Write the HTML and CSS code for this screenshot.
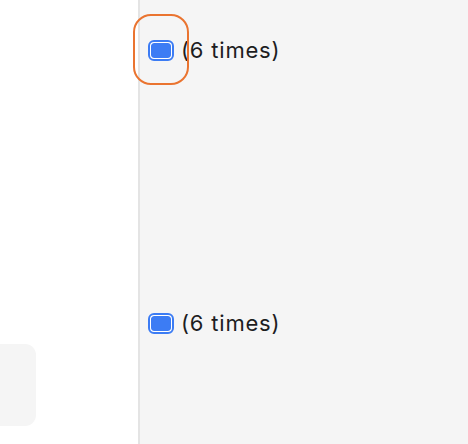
FILE: index.html
```html
<!DOCTYPE html>
<html>
<head>
<meta charset="utf-8">
<link rel="stylesheet" href="styles.css">
</head>
<body>
<div class="layout">
  <aside class="side">
    <div class="side-card"></div>
  </aside>
  <main class="main">
    <div class="row row-first">
      <span class="check"></span>
      <span class="label">(6 times)</span>
      <span class="ring"></span>
    </div>
    <div class="row row-second">
      <span class="check"></span>
      <span class="label">(6 times)</span>
    </div>
  </main>
</div>
</body>
</html>
```
FILE: styles.css
```css
html, body {
  margin: 0;
  padding: 0;
  height: 100%;
}
body {
  font-family: Inter, "Liberation Sans", sans-serif;
  color: #1d1d1f;
  background: #ffffff;
}
.layout {
  display: flex;
  height: 444px;
}
.side {
  width: 140px;
  flex: none;
  background: #ffffff;
  border-right: 2px solid #e4e4e4;
  display: flex;
  flex-direction: column;
  justify-content: flex-end;
  padding-bottom: 18px;
  box-sizing: border-box;
}
.side-card {
  width: 36px;
  height: 82px;
  background: #f5f5f5;
  border-radius: 0 11px 11px 0;
}
.main {
  flex: 1;
  background: #f5f5f5;
  padding: 0 0 0 8px;
  display: flex;
  flex-direction: column;
}
.row {
  position: relative;
  display: flex;
  align-items: center;
  gap: 7px;
  height: 22px;
}
.row-first {
  margin-top: 39px;
}
.row-second {
  margin-top: 251px;
}
.check {
  box-sizing: border-box;
  width: 26px;
  height: 21px;
  border: 2px solid #3c7cf4;
  border-radius: 6px;
  padding: 1px;
  background: #3c7cf4;
  background-clip: content-box;
  box-shadow: inset 0 0 0 1px #ffffff;
  flex: none;
}
.label {
  font-size: 22px;
  line-height: 22px;
  letter-spacing: 0.8px;
}
.ring {
  position: absolute;
  left: -15px;
  top: -25px;
  width: 52px;
  height: 67px;
  border: 2px solid #ea7430;
  border-radius: 18px;
}
```
